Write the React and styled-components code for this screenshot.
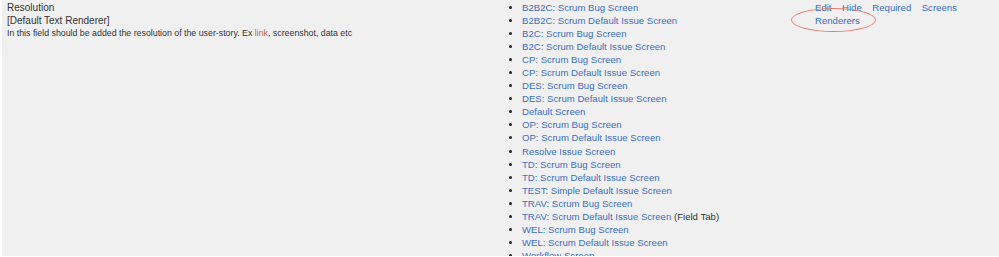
import React from "react";
import styled, { createGlobalStyle } from "styled-components";

const Global = createGlobalStyle`
  html, body { margin: 0; padding: 0; background: #ffffff; }
  body { font-family: "Liberation Sans", Arial, Helvetica, sans-serif; }
`;

const Row = styled.div`
  display: grid;
  grid-template-columns: 500px 306px 1fr;
  margin: 0 0 1px 2px;
  height: 256px;
  overflow: hidden;
  background: #f0f0f0;
  color: #333333;
  font-size: 10px;
  line-height: 13px;
`;

const Cell = styled.div`
  padding: 1px 0 0 ${(p) => p.$pl || 5}px;
  position: relative;
`;

const FieldName = styled.div`
  color: #333333;
`;

const Renderer = styled.div`
  color: #333333;
`;

const Description = styled.div`
  font-size: 8.8px;
  line-height: 13px;
  color: #333333;
  white-space: nowrap;
`;

const Accent = styled.span`
  color: #c4651c;
`;

const ScreenList = styled.ul`
  margin: 0;
  padding: 0 0 0 18px;
  list-style: disc;
  font-size: 9.6px;
`;

const ScreenItem = styled.li`
  color: #222;
  white-space: nowrap;
  line-height: 13.05px;
`;

const Link = styled.a`
  color: #3b6fc3;
  text-decoration: none;
  cursor: pointer;
`;

const Note = styled.span`
  color: #333333;
`;

const Ops = styled.div`
  display: flex;
  flex-wrap: wrap;
  column-gap: 10.5px;
  width: 146px;
  font-size: 9.6px;
`;

const Ellipse = styled.div`
  position: absolute;
  left: -17px;
  top: 8px;
  width: 83px;
  height: 22px;
  border: 1px solid #ec7a6e;
  border-radius: 50%;
  pointer-events: none;
`;

const screens = [
  ["B2B2C: Scrum Bug Screen"],
  ["B2B2C: Scrum Default Issue Screen"],
  ["B2C: Scrum Bug Screen"],
  ["B2C: Scrum Default Issue Screen"],
  ["CP: Scrum Bug Screen"],
  ["CP: Scrum Default Issue Screen"],
  ["DES: Scrum Bug Screen"],
  ["DES: Scrum Default Issue Screen"],
  ["Default Screen"],
  ["OP: Scrum Bug Screen"],
  ["OP: Scrum Default Issue Screen"],
  ["Resolve Issue Screen"],
  ["TD: Scrum Bug Screen"],
  ["TD: Scrum Default Issue Screen"],
  ["TEST: Simple Default Issue Screen"],
  ["TRAV: Scrum Bug Screen"],
  ["TRAV: Scrum Default Issue Screen", "(Field Tab)"],
  ["WEL: Scrum Bug Screen"],
  ["WEL: Scrum Default Issue Screen"],
  ["Workflow Screen"],
];

export default function App() {
  return (
    <>
      <Global />
      <Row>
        <Cell $pl={5}>
          <FieldName>Resolution</FieldName>
          <Renderer>[Default Text Renderer]</Renderer>
          <Description>
            In this field should be added the resolution of the user-story. Ex{" "}
            <Accent>link</Accent>, screenshot, data etc
          </Description>
        </Cell>
        <Cell $pl={2}>
          <ScreenList>
            {screens.map(([name, note]) => (
              <ScreenItem key={name}>
                <Link>{name}</Link>
                {note ? <Note> {note}</Note> : null}
              </ScreenItem>
            ))}
          </ScreenList>
        </Cell>
        <Cell $pl={7}>
          <Ops>
            <Link>Edit</Link>
            <Link>Hide</Link>
            <Link>Required</Link>
            <Link>Screens</Link>
            <Link>Renderers</Link>
          </Ops>
          <Ellipse />
        </Cell>
      </Row>
    </>
  );
}
